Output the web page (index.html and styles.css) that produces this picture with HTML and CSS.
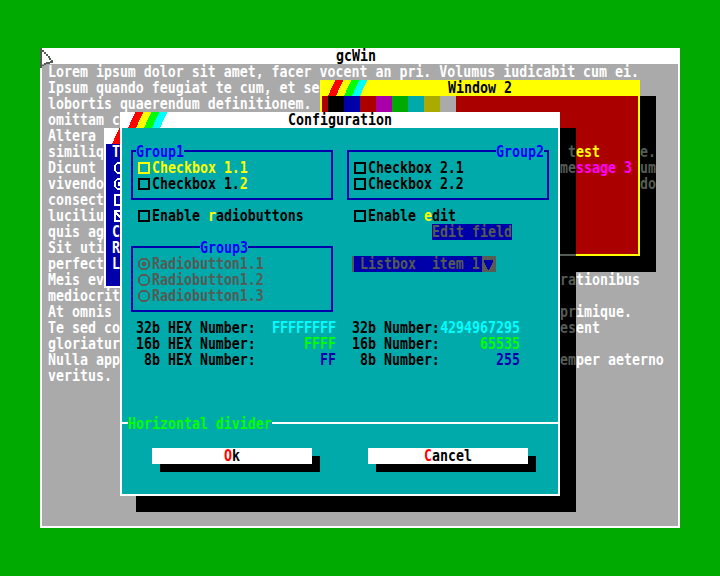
FILE: index.html
```html
<!DOCTYPE html>
<html lang="en">
<head>
<meta charset="utf-8">
<title>gcWin</title>
<link rel="stylesheet" href="styles.css">
</head>
<body>
<svg class="defs" width="0" height="0">
  <symbol id="box" viewBox="0 0 12 12"><path d="M1 1H11V11H1Z" fill="none" stroke="currentColor" stroke-width="2"/></symbol>
  <symbol id="boxon" viewBox="0 0 12 12"><path d="M1 1H11V11H1ZM2 3L9 10M10 3L5 8" fill="none" stroke="currentColor" stroke-width="2"/></symbol>
  <symbol id="radio" viewBox="0 0 12 12"><path d="M3 0H9V2H3ZM3 10H9V12H3ZM0 3H2V9H0ZM10 3H12V9H10ZM1 2H3V3H1ZM2 1H3V2H2ZM9 1H10V2H11V3H9ZM1 9H3V11H2V10H1ZM9 9H11V10H10V11H9Z" fill="currentColor"/></symbol>
  <symbol id="radioon" viewBox="0 0 12 12"><use href="#radio"/><path d="M4 4H8V8H4Z" fill="currentColor"/></symbol>
  <symbol id="stripes" viewBox="0 0 39 16">
    <path d="M0 16L7.2 0H15.2L8 16Z" fill="#f00"/><path d="M8 16L15.2 0H23.2L16 16Z" fill="#ff0"/>
    <path d="M16 16L23.2 0H31.2L24 16Z" fill="#0f0"/><path d="M24 16L31.2 0H39.2L32 16Z" fill="#0ff"/>
  </symbol>
</svg>
<main class="screen">
  <section class="win main-win">
    <header class="bar"><b class="t">gcWin</b></header>
    <div class="prose">
      <p class="t">Lorem ipsum dolor sit amet, facer vocent an pri. Volumus iudicabit cum ei.</p>
      <p class="t">Ipsum quando feugiat te cum, et se</p>
      <p class="t">lobortis quaerendum definitionem.</p>
      <p class="t">omittam c</p>
      <p class="t">Altera</p>
      <p class="t">similiq</p>
      <p class="t">Dicunt</p>
      <p class="t">vivendo</p>
      <p class="t">consect</p>
      <p class="t">luciliu</p>
      <p class="t">quis ag</p>
      <p class="t">Sit uti</p>
      <p class="t">perfect</p>
      <div class="split"><p class="t">Meis ev</p><p class="t">tionibus</p></div>
      <p class="t">mediocrit</p>
      <div class="split"><p class="t">At omnis</p><p class="t">imique.</p></div>
      <div class="split"><p class="t">Te sed co</p><p class="t">ent</p></div>
      <p class="t">gloriatur</p>
      <div class="split"><p class="t">Nulla app</p><p class="t">per aeterno</p></div>
      <p class="t">veritus.</p>
    </div>
  </section>

  <div class="shadow shadow2"><p class="t">e.</p><p class="t">um</p><p class="t">do</p></div>
  <section class="win win2">
    <header class="bar"><svg class="stripes" width="39" height="16"><use href="#stripes"/></svg><b class="t">Window 2</b></header>
    <div class="swatches"><i class="c0"></i><i class="c1"></i><i class="c2"></i><i class="c3"></i><i class="c4"></i><i class="c5"></i><i class="c6"></i><i class="c7"></i></div>
    <div class="log">
      <p class="t test">est</p>
      <p class="t message">ssage 3</p>
    </div>
  </section>

  <section class="win win1">
    <header class="bar"><svg class="stripes" width="39" height="16"><use href="#stripes"/></svg></header>
    <div class="tools">
      <p class="t">T</p>
      <p class="line"><svg width="12" height="12"><use href="#radio"/></svg></p>
      <p class="line"><svg width="12" height="12"><use href="#radioon"/></svg></p>
      <p class="line"><svg width="12" height="12"><use href="#box"/></svg></p>
      <p class="line"><svg width="12" height="12"><use href="#boxon"/></svg></p>
      <p class="t">C</p><p class="t">R</p><p class="t">L</p>
    </div>
  </section>

  <div class="shadow shadow3">
    <div class="dimmed">
      <p class="t"> t</p><p class="t">me</p>
      <hr class="dim-edge">
      <p class="t">ra</p><p class="t"> </p><p class="t">pr</p><p class="t">es</p><p class="t"> </p><p class="t">em</p>
    </div>
  </div>
  <section class="win dialog">
    <header class="bar"><svg class="stripes" width="39" height="16"><use href="#stripes"/></svg><b class="t">Configuration</b></header>
    <div class="cols">
      <div>
        <div class="group">
          <div class="legend"><span class="t">Group1</span></div>
          <div class="opt yellow"><svg width="12" height="12"><use href="#box"/></svg><span class="t">Checkbox 1.1</span></div>
          <div class="opt"><svg width="12" height="12"><use href="#box"/></svg><span class="t">Checkbox 1.<em class="yellow">2</em></span></div>
        </div>
        <div class="opt enable"><svg width="12" height="12"><use href="#box"/></svg><span class="t">Enable <em class="yellow">r</em>adiobuttons</span></div>
        <div class="group group3">
          <div class="legend center"><span class="t">Group3</span></div>
          <div class="opt gray"><svg width="12" height="12"><use href="#radioon"/></svg><span class="t">Radiobutton1.1</span></div>
          <div class="opt gray"><svg width="12" height="12"><use href="#radio"/></svg><span class="t">Radiobutton1.2</span></div>
          <div class="opt gray"><svg width="12" height="12"><use href="#radio"/></svg><span class="t">Radiobutton1.3</span></div>
        </div>
        <div class="numbers hex">
          <div><span class="t">32b HEX Number:</span><span class="t aqua">FFFFFFFF</span></div>
          <div><span class="t">16b HEX Number:</span><span class="t lime">FFFF</span></div>
          <div><span class="t"> 8b HEX Number:</span><span class="t navy">FF</span></div>
        </div>
      </div>
      <div>
        <div class="group">
          <div class="legend right"><span class="t">Group2</span></div>
          <div class="opt"><svg width="12" height="12"><use href="#box"/></svg><span class="t">Checkbox 2.1</span></div>
          <div class="opt"><svg width="12" height="12"><use href="#box"/></svg><span class="t">Checkbox 2.2</span></div>
        </div>
        <div class="opt enable"><svg width="12" height="12"><use href="#box"/></svg><span class="t">Enable <em class="yellow">e</em>dit</span></div>
        <div class="edit"><span class="t">Edit field</span></div>
        <div class="listbox"><span class="t">Listbox  item 1</span><svg width="14" height="16" viewBox="0 0 14 16"><path d="M2 4H11V7H10V9H9V11H8V13H7V14H6V13H5V11H4V9H3V7H2Z" fill="#00a"/></svg></div>
        <div class="numbers dec">
          <div><span class="t">32b Number:</span><span class="t aqua">4294967295</span></div>
          <div><span class="t">16b Number:</span><span class="t lime">65535</span></div>
          <div><span class="t"> 8b Number:</span><span class="t navy">255</span></div>
        </div>
      </div>
    </div>
    <div class="divider"><span class="t">Horizontal divider</span></div>
    <div class="buttons">
      <button type="button"><span class="t"><em>O</em>k</span></button>
      <button type="button"><span class="t"><em>C</em>ancel</span></button>
    </div>
  </section>
  <svg class="cursor" width="14" height="20" viewBox="0 0 14 20">
    <path d="M2 2L12 13V14H7V16H2Z" fill="#fff"/>
    <path d="M0 0H2V2H4V4H6V6H8V8H10V10H11V12H13V15H10V16H6V17H4V18H2V20H0ZM2 4V17H4V15H6V14H10V13H11V12H9V10H8V8H6V6H4V4Z" fill="#555b55" fill-rule="evenodd"/>
  </svg>
</main>
</body>
</html>
```

FILE: styles.css
```css
* { box-sizing: border-box; }
body { margin: 0; background: #0a0; }
p, hr { margin: 0; }
em, i { font-style: normal; }
.defs { position: absolute; }
svg { display: block; flex: none; shape-rendering: crispEdges; }

.screen {
  position: relative;
  width: 720px;
  height: 576px;
  overflow: hidden;
  background: #0a0;
  color: #000;
  font: bold 13.288px/12.9px "DejaVu Sans Mono", monospace;
}
/* tall 8x16 character cells */
.t {
  display: block;
  height: 12.9px;
  margin-bottom: 3.1px;
  white-space: pre;
  transform: translateY(1px) scaleY(1.24);
  transform-origin: 0 0;
}

/* windows */
.win { position: absolute; border: 2px solid #fff; border-top: 0; }
.bar {
  position: relative;
  display: flex;
  justify-content: center;
  height: 16px;
  margin: 0 -2px;
  background: #fff;
}
.stripes { position: absolute; left: 8px; top: 0; }
.shadow { position: absolute; background: #000; color: #555b55; }

.main-win { left: 40px; top: 48px; width: 640px; height: 480px; background: #aaa; }
.main-win .bar { padding-right: 8px; }
.prose { display: grid; grid-auto-rows: 16px; padding-left: 6px; color: #fff; }
.split { display: grid; grid-template-columns: 528px auto; }

.win2 { left: 320px; top: 80px; width: 320px; height: 176px; background: #a00; border-color: #ff0; }
.win2 .bar { background: #ff0; }
.shadow2 {
  left: 336px;
  top: 96px;
  display: grid;
  grid-auto-rows: 16px;
  align-content: start;
  width: 320px;
  height: 176px;
  padding: 48px 0 0 304px;
}
.swatches { display: flex; margin: 0 0 32px 6px; }
.swatches i { width: 16px; height: 16px; }
.c0 { background: #000; }
.c1 { background: #00a; }
.c2 { background: #a00; }
.c3 { background: #a0a; }
.c4 { background: #0a0; }
.c5 { background: #0aa; }
.c6 { background: #aa0; }
.c7 { background: #aaa; }
.log { display: grid; grid-auto-rows: 16px; padding-left: 254px; }
.test { color: #ff0; }
.message { color: #f0f; }

.win1 { left: 104px; top: 128px; width: 160px; height: 160px; background: #00a; color: #fff; }
.tools { display: grid; grid-auto-rows: 16px; padding-left: 6px; }
.line { padding: 2px 0 0 2px; }

/* configuration dialog */
.dialog { left: 120px; top: 112px; width: 440px; height: 384px; background: #0aa; }
.shadow3 { left: 136px; top: 128px; width: 440px; height: 384px; }
.dimmed {
  display: grid;
  grid-template-rows: 16px 16px 96px;
  grid-auto-rows: 16px;
  padding: 16px 0 0 424px;
}
.dim-edge { height: 2px; border: 0; margin-top: 78px; background: #555b55; }

.cols {
  display: grid;
  grid-template-columns: 202px 202px;
  gap: 14px;
  padding: 22px 0 0 9px;
}
.group { border: 2px solid #00a; padding: 0 3px 6px; }
.legend { display: flex; height: 16px; margin-top: -8px; color: #00f; }
.legend .t { background: linear-gradient(#0aa, #0aa) 0 3px / 100% 7px no-repeat; }
.center { justify-content: center; padding-right: 16px; }
.right { justify-content: flex-end; }
.opt { display: flex; gap: 2px; height: 16px; padding-left: 2px; }
.opt svg { margin-top: 2px; }
.enable { margin-top: 8px; padding-left: 7px; }
.group3 { margin-top: 22px; }
.yellow { color: #ff0; }
.gray { color: #555b55; }
.aqua { color: #0ff; }
.lime { color: #0f0; }
.navy { color: #00a; }
.edit { width: 80px; height: 16px; margin-left: 85px; background: #00a; color: #555b55; }
.listbox {
  display: flex;
  justify-content: space-between;
  width: 144px;
  height: 16px;
  margin: 16px 0 0 5px;
  padding-left: 6px;
  border-left: 2px solid #555b55;
  background: #00a;
  color: #555b55;
}
.listbox svg { background: #555b55; }
.numbers { margin: 8px 0 0 5px; }
.numbers div { display: flex; justify-content: space-between; height: 16px; }
.hex { width: 200px; }
.dec { width: 168px; margin-top: 48px; }

.divider { display: flex; height: 16px; margin-top: 48px; color: #0f0; }
.divider::before, .divider::after { content: ""; height: 2px; margin-top: 6px; background: #fff; }
.divider::before { width: 6px; }
.divider::after { flex: 1; }
.buttons { display: flex; gap: 56px; margin: 16px 0 0 30px; }
.buttons button {
  display: flex;
  justify-content: center;
  width: 160px;
  height: 16px;
  padding: 0;
  border: 0;
  background: #fff;
  box-shadow: 8px 8px #000;
  font: inherit;
  color: #000;
}
.buttons em { color: #f00; }

.cursor { position: absolute; left: 40px; top: 48px; }
```
